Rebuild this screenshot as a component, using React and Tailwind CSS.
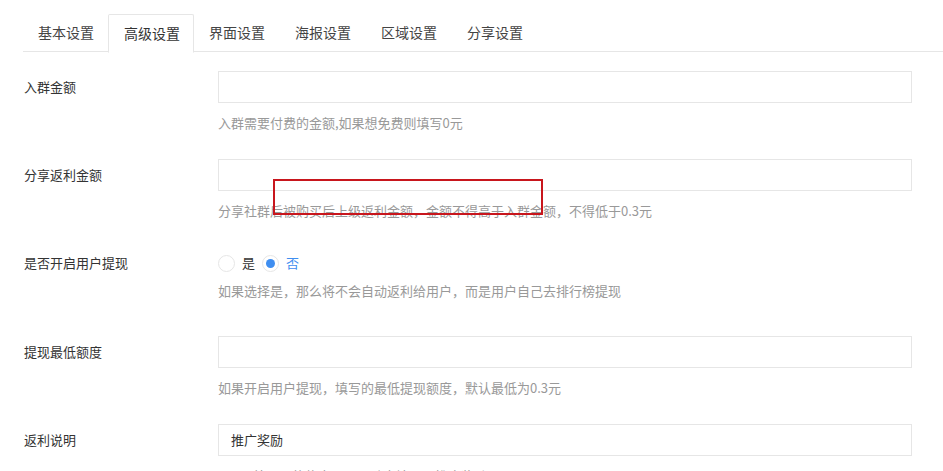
import React from 'react';

const tabs = ['基本设置', '高级设置', '界面设置', '海报设置', '区域设置', '分享设置'];

const Field = ({ label, help, value, last }) => (
  <div className={`flex ${last ? '' : 'mb-[26px]'}`}>
    <div className="w-[194px] h-[32px] leading-[32px] text-[13px] text-[#333]">{label}</div>
    <div className="w-[694px]">
      <div className="h-[32px] border border-[#e6e6e6] bg-white px-[12px] leading-[30px] text-[13px] text-[#333]">
        {value}
      </div>
      <div className="mt-[10px] leading-[20px] text-[13px] text-[#999]">{help}</div>
    </div>
  </div>
);

const Radio = ({ checked, label }) => (
  <label className="flex items-center gap-[7px]">
    <span className="w-[17px] h-[17px] rounded-full border border-[#e6e6e6] bg-white flex items-center justify-center">
      {checked && <span className="w-[9px] h-[9px] rounded-full bg-[#3f8ef0]" />}
    </span>
    <span className={`text-[13px] ${checked ? 'text-[#3f8ef0]' : 'text-[#333]'}`}>{label}</span>
  </label>
);

export default function App() {
  return (
    <div
      className="relative h-[471px] w-[943px] overflow-hidden bg-white"
      style={{ fontFamily: '"Noto Sans CJK SC", "Noto Sans", sans-serif' }}
    >
      {/* Tabs */}
      <div className="ml-[23px] mt-[14px] flex h-[38px] border-b border-[#e6e6e6]">
        {tabs.map((t, i) => (
          <div
            key={t}
            className={`h-[39px] leading-[37px] text-[14px] ${
              i === 1
                ? 'border border-[#e6e6e6] border-b-white rounded-t-[2px] bg-white text-[#333] pl-[15px] pr-[13px] -ml-px'
                : 'px-[15px] text-[#444]'
            }`}
          >
            {t}
          </div>
        ))}
      </div>

      {/* Form */}
      <div className="pl-[24px] pt-[19px]">
        <Field label="入群金额" help="入群需要付费的金额,如果想免费则填写0元" />
        <Field label="分享返利金额" help="分享社群后被购买后上级返利金额，金额不得高于入群金额，不得低于0.3元" />

        <div className="flex mb-[35px]">
          <div className="w-[194px] h-[32px] leading-[32px] text-[13px] text-[#333]">是否开启用户提现</div>
          <div className="w-[694px]">
            <div className="h-[32px] flex items-center gap-[7px]">
              <Radio label="是" />
              <Radio checked label="否" />
            </div>
            <div className="mt-[2px] leading-[20px] text-[13px] text-[#999]">
              如果选择是，那么将不会自动返利给用户，而是用户自己去排行榜提现
            </div>
          </div>
        </div>

        <Field label="提现最低额度" help="如果开启用户提现，填写的最低提现额度，默认最低为0.3元" />
        <Field label="返利说明" value="推广奖励" help="LOGO处显示的信息，可以随意填写，推广奖励" last />
      </div>

      {/* annotation box */}
      <div className="absolute left-[273px] top-[179px] w-[270px] h-[36px] border-2 border-[#c8161d]" />
    </div>
  );
}
